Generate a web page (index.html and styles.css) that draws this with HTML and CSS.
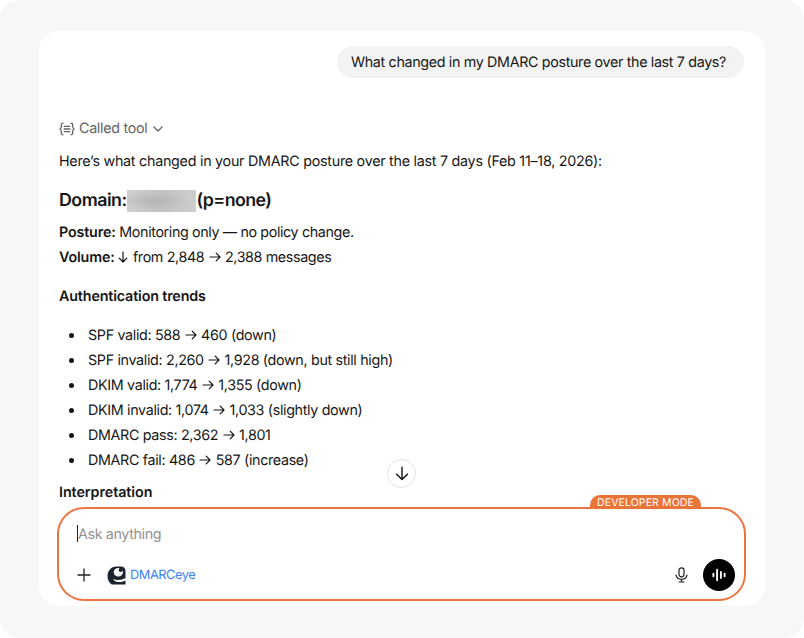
FILE: index.html
```html
<!DOCTYPE html>
<html lang="en">
<head>
<meta charset="utf-8">
<title>DMARC posture chat</title>
<link rel="stylesheet" href="styles.css">
</head>
<body>
<div class="frame">
  <main class="card">
    <div class="user-row"><div class="bubble"><span>What changed in my DMARC posture over the last 7 days?</span></div></div>
    <div class="tool">
      <svg class="tool-icon" width="16" height="14" viewBox="0 0 16 14" fill="none" stroke="currentColor" stroke-width="1.3" stroke-linecap="round" stroke-linejoin="round"><path d="M4 1.2C2.7 1.2 2.3 1.8 2.3 2.9v1.900c0 1.200-.5 1.700-1.400 2.200.9.5 1.400 1 1.400 2.200v1.900c0 1.100.4 1.700 1.700 1.700M12 1.200c1.300 0 1.700.6 1.700 1.700v1.900c0 1.200.5 1.700 1.400 2.200-.9.5-1.400 1-1.400 2.200v1.900c0 1.100-.4 1.700-1.700 1.700M5.200 4.300h5.600M5.200 7h5.600M5.200 9.700h5.600"/></svg>
      <span class="tool-label">Called tool</span>
      <svg width="10" height="6" viewBox="0 0 10 6" fill="none" stroke="currentColor" stroke-width="1.3" stroke-linecap="round" stroke-linejoin="round"><path d="M1 1l4 4 4-4"/></svg>
    </div>
    <p class="intro"><span>Here’s what changed in your DMARC posture over the last 7 days (Feb 11–18, 2026):</span></p>
    <h2><span>Domain:</span><i class="redacted"></i><span>(p=none)</span></h2>
    <p><b>Posture:</b> Monitoring only — no policy change.</p>
    <p><b>Volume:</b> <svg class="down" viewBox="0 0 10 12"><path d="M5 1v10M1.2 7.2L5 11l3.8-3.8"/></svg> from 2,848 <svg class="arrow" viewBox="0 0 12 10"><path d="M1 5h10M7.2 1.2L11 5 7.2 8.8"/></svg> 2,388 messages</p>
    <h3>Authentication trends</h3>
    <ul>
      <li>SPF valid: 588 <svg class="arrow" viewBox="0 0 12 10"><path d="M1 5h10M7.2 1.2L11 5 7.2 8.8"/></svg> 460 (down)</li>
      <li>SPF invalid: 2,260 <svg class="arrow" viewBox="0 0 12 10"><path d="M1 5h10M7.2 1.2L11 5 7.2 8.8"/></svg> 1,928 (down, but still high)</li>
      <li>DKIM valid: 1,774 <svg class="arrow" viewBox="0 0 12 10"><path d="M1 5h10M7.2 1.2L11 5 7.2 8.8"/></svg> 1,355 (down)</li>
      <li>DKIM invalid: 1,074 <svg class="arrow" viewBox="0 0 12 10"><path d="M1 5h10M7.2 1.2L11 5 7.2 8.8"/></svg> 1,033 (slightly down)</li>
      <li>DMARC pass: 2,362 <svg class="arrow" viewBox="0 0 12 10"><path d="M1 5h10M7.2 1.2L11 5 7.2 8.8"/></svg> 1,801</li>
      <li>DMARC fail: 486 <svg class="arrow" viewBox="0 0 12 10"><path d="M1 5h10M7.2 1.2L11 5 7.2 8.8"/></svg> 587 (increase)</li>
    </ul>
    <h4>Interpretation</h4>
    <section class="composer">
      <div class="scroll"><svg width="14" height="15" viewBox="0 0 14 15" fill="none" stroke="#111" stroke-width="1.4" stroke-linecap="round" stroke-linejoin="round"><path d="M7 1.2v12.4M1.6 8.3L7 13.6l5.4-5.3"/></svg></div>
      <div class="mode"><span>DEVELOPER MODE</span></div>
      <div class="prompt">Ask anything</div>
      <div class="actions">
        <svg width="14" height="14" viewBox="0 0 14 14" fill="none" stroke="#222" stroke-width="1.3" stroke-linecap="round"><path d="M7 1v12M1 7h12"/></svg>
        <svg class="logo" width="19" height="19" viewBox="0 0 19 19"><path fill="#1d2430" d="M9.500.5H14C16.800.5 18.500 2.500 18.500 5V18.500H4.800C2 17 .5 13.800.5 10 .5 4.500 4.300.5 9.500.5Z"/><path fill="#fff" d="M11.300 2C8.700 2 6.700 3.800 6.700 6.300s2 4.300 4.600 4.300 4.600-1.800 4.600-4.300c0-.7-.2-1.300-.4-1.800-.3.900-1 1.500-1.900 1.500-1.100 0-1.900-.9-1.900-2 0-.7.300-1.300.8-1.700-.4-.2-.8-.3-1.200-.3ZM6.200 12.700c1.500.9 3 1.300 5 1.300 2.800 0 5.200-.6 7.800-1.900v2.200c-1.800 1.100-4.200 1.800-6.800 1.800-3.200 0-5.200-1.200-6-3.400Z"/></svg>
        <span class="app">DMARCeye</span>
        <svg class="mic" width="13" height="16" viewBox="0 0 13 16" fill="none" stroke="#222" stroke-width="1.2" stroke-linecap="round"><rect x="4" y=".8" width="5" height="9" rx="2.500"/><path d="M1 8.200c.5 2.500 2.700 4.100 5.500 4.100s5-1.600 5.500-4.100M6.500 12.400v2.500M4 15h5"/></svg>
        <div class="voice"><svg width="14" height="14" viewBox="0 0 14 14" stroke="#fff" stroke-width="1.9" stroke-linecap="round"><path d="M1.400 5.800v2.400M5.100 1.800v10.400M8.900 4v6M12.600 5.800v2.400"/></svg></div>
      </div>
    </section>
  </main>
</div>
</body>
</html>
```
FILE: styles.css
```css
* { box-sizing: border-box; }
body { margin: 0; background: #fff; color: #161616; font: 14.3px/25px Inter, "Liberation Sans", sans-serif; letter-spacing: -.37px; text-rendering: geometricPrecision; }
.frame { width: 804px; height: 638px; padding: 31px 39px; background: #f7f7f7; border-radius: 20px; }
.card { width: 726px; height: 575px; padding: 15px 19px 0 20px; background: #fff; border-radius: 20px; }
.user-row { display: flex; justify-content: flex-end; padding-right: 2px; }
.bubble { width: 407px; height: 32px; padding-left: 14px; border-radius: 16px; background: #f3f3f3; line-height: 34px; letter-spacing: -.34px; white-space: nowrap; }
.tool { display: flex; align-items: center; height: 25px; margin-top: 38px; color: #646464; }
.tool-label { margin: 0 6px 0 4px; letter-spacing: -.3px; }
p, h2, h3, h4, ul { margin: 0; white-space: nowrap; }
.intro { margin-top: 8px; letter-spacing: -.26px; }
b { font-weight: 600; letter-spacing: -.15px; }
h2 { display: flex; align-items: center; height: 30px; margin: 11px 0 5px; font-size: 17.8px; font-weight: 600; letter-spacing: -.5px; }
h2 span:last-child { letter-spacing: -.6px; }
.redacted { width: 69px; height: 22px; margin: 2px 1px 0 0; background: radial-gradient(ellipse at 40% 50%, #b5b5b5, transparent 60%), linear-gradient(90deg, #d0d0d0, #c2c2c2 50%, #cecece); }
h3, h4 { font-size: 14.3px; font-weight: 600; letter-spacing: -.15px; }
h4 { letter-spacing: -.06px; }
h3 { margin-top: 14px; }
ul { margin-top: 14px; padding-left: 29px; list-style: none; letter-spacing: -.33px; }
li { position: relative; }
li::before { content: ""; position: absolute; left: -19px; top: 10px; width: 5px; height: 5px; border-radius: 50%; background: #161616; }
h4 { margin-top: 7px; }
.arrow, .down { fill: none; stroke: currentColor; stroke-width: 1.2; stroke-linecap: round; stroke-linejoin: round; }
.arrow { width: 12px; height: 10px; margin: 0 .7px; }
.down { width: 10px; height: 12px; margin-right: 1px; vertical-align: -1px; }
.composer { position: relative; width: 689px; height: 94px; margin: 2px 0 0 -2px; padding: 16px 9px 0 19px; border: 2px solid #eb7440; border-radius: 27px; background: #fff; }
.scroll { position: absolute; left: 328px; top: -50px; width: 29px; height: 29px; display: grid; place-items: center; border: 1px solid #e4e4e4; border-radius: 50%; background: #fff; }
.mode { position: absolute; left: 531px; top: -14px; width: 111px; height: 14px; border-radius: 10px 10px 0 0; background: #e97438; color: #fff; font-size: 10.5px; line-height: 16px; text-align: center; letter-spacing: .12px; white-space: nowrap; }
.prompt { width: 100px; height: 17px; margin-left: -1px; border-left: 1px solid #222; color: #919191; line-height: 19px; white-space: nowrap; }
.actions { display: flex; align-items: center; height: 32px; margin: 17px 0 0 -1px; }
.logo { margin-left: 16px; }
.app { margin: 1px 0 0 4px; color: #3c82f6; font-size: 12.8px; letter-spacing: -.45px; }
.mic { margin-left: auto; }
.voice { display: grid; place-items: center; width: 32px; height: 32px; margin-left: 15px; border-radius: 50%; background: #000; }
```
